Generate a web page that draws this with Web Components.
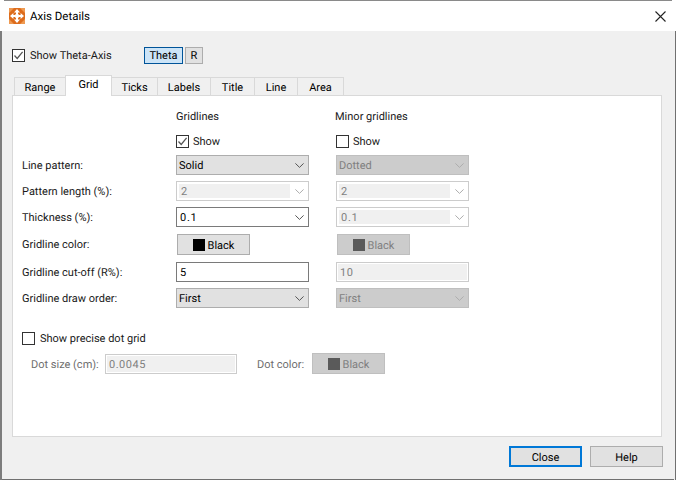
<!DOCTYPE html>
<html>
<head>
<meta charset="utf-8">
<title>Axis Details</title>
<style>
  html, body { margin: 0; padding: 0; background: #fff; }
  body { font: 12px Roboto, "Noto Sans", sans-serif; color: #000; text-rendering: geometricPrecision; }
</style>
</head>
<body>
<axis-dialog></axis-dialog>
<script>
(function() {
  'use strict';

  const CHEVRON = '<svg width="9" height="5" viewBox="0 0 9 5"><path d="M.4.4 4.5 4.4 8.6.4" fill="none" stroke="currentColor" stroke-width="1"/></svg>';

  class WinCheck extends HTMLElement {
    connectedCallback() {
      this.attachShadow({ mode: 'open' });
      const checked = this.hasAttribute('checked');
      this.shadowRoot.innerHTML = `
        <style>
          :host { display: flex; align-items: center; gap: 4px; height: 14px; white-space: nowrap; color: #1a1a1a; }
          .box { width: 11px; height: 11px; border: 1px solid #333; background: #fff; flex: none; display: block; }
          svg { display: block; }
        </style>
        <span class="box">${checked ? '<svg width="11" height="11" viewBox="0 0 11 11"><path d="M1.5 5.5 4.2 8.4 9.6 1.8" fill="none" stroke="#555" stroke-width="1.3"/></svg>' : ''}</span>
        <span><slot></slot></span>`;
    }
  }

  // combo box; state picks the disabled and editable looks
  class WinSelect extends HTMLElement {
    connectedCallback() {
      this.attachShadow({ mode: 'open' });
      this.shadowRoot.innerHTML = `
        <style>
          :host { display: block; box-sizing: border-box; width: 133px; height: 20px; border: 1px solid #adadad; background: #e1e1e1; color: #000; position: relative; }
          .in { box-sizing: border-box; display: flex; align-items: center; height: 100%; padding: 1px 0 0 2px; }
          .arrow { position: absolute; right: 4px; top: 7px; line-height: 0; color: #555; }
          :host([state="disabled"]) { background: #ccc; border-color: #bfbfbf; color: #7f7f7f; }
          :host([state="disabled"]) .arrow { color: #adadad; }
          :host([state="edit"]) { background: #fff; border-color: #7a7a7a; }
          :host([state="edit"]) .in { padding-left: 3px; letter-spacing: .7px; }
          :host([state="edit-off"]) { background: #fff; border-color: #ccc; color: #7f7f7f; }
          :host([state="edit-off"]) .in { background: #f0f0f0; margin: 2px 0 2px 2px; width: 111px; height: 14px; padding-left: 2px; letter-spacing: .7px; }
          :host([state="edit-off"]) .arrow { color: #adadad; }
        </style>
        <div class="in"><slot></slot></div>
        <div class="arrow">${CHEVRON}</div>`;
    }
  }

  class WinInput extends HTMLElement {
    connectedCallback() {
      this.attachShadow({ mode: 'open' });
      this.shadowRoot.innerHTML = `
        <style>
          :host { display: flex; align-items: center; box-sizing: border-box; width: 133px; height: 20px; border: 1px solid #7a7a7a; background: #fff; padding: 1px 0 0 3px; }
          :host([disabled]) { border-color: #ccc; background: #f0f0f0; box-shadow: inset 0 0 0 1px #fff; color: #7f7f7f; letter-spacing: .5px; }
        </style>
        <slot></slot>`;
    }
  }

  class WinButton extends HTMLElement {
    connectedCallback() {
      this.attachShadow({ mode: 'open' });
      this.shadowRoot.innerHTML = `
        <style>
          :host { display: flex; align-items: center; justify-content: center; box-sizing: border-box; width: 73px; height: 21px; border: 1px solid #adadad; background: #e1e1e1; color: #000; gap: 3px; }
          :host([default]) { border: 2px solid #0078d7; }
          :host([disabled]) { background: #ccc; border-color: #bfbfbf; color: #7f7f7f; }
          .sw { width: 12px; height: 12px; background: #000; }
          :host([disabled]) .sw { background: #5a5a5a; }
          :host(:not([swatch])) .sw { display: none; }
          .tx { padding-top: 1px; }
        </style>
        <span class="sw"></span><span class="tx"><slot></slot></span>`;
    }
  }

  class AxisDialog extends HTMLElement {
    connectedCallback() {
      this.attachShadow({ mode: 'open' });
      const tabs = ['Range', 'Grid', 'Ticks', 'Labels', 'Title', 'Line', 'Area'];
      const widths = [51, 46, 46, 53, 44, 43, 46];
      this.shadowRoot.innerHTML = `
        <style>
          :host { display: block; width: 676px; height: 480px; background: #fff; font-size: 11px; }
          .title { box-sizing: border-box; height: 31px; padding: 1px 10px 0 9px; display: flex; align-items: center; gap: 5px; color: #000; background: linear-gradient(#8a8a8a, #8a8a8a) 4px 0 / 668px 1px no-repeat #fff; font-size: 11.5px; }
          .title svg.logo { display: block; }
          .title .close { margin-left: auto; display: block; }
          .main { box-sizing: border-box; height: 449px; background: linear-gradient(#707070, #707070) 0 100% / 672px 1px no-repeat #f0f0f0; border-left: 2px solid #7d7d7d; border-right: 1px solid #707070; }
          .top { display: flex; align-items: center; padding: 15px 0 0 10px; height: 18px; }
          .top win-check { width: 132px; gap: 5px; }
          .mode { box-sizing: border-box; height: 17px; padding-top: 1px; display: flex; align-items: center; justify-content: center; border: 1px solid #adadad; background: #e1e1e1; width: 18px; }
          .modes { display: flex; gap: 2px; }
          .mode.on { width: 39px; background: #cce4f7; border-color: #005499; }
          .tabs { display: flex; padding: 10px 0 0 13px; height: 21px; align-items: flex-end; position: relative; z-index: 1; }
          .tab { box-sizing: border-box; height: 18px; padding-top: 1px; display: flex; align-items: center; justify-content: center; background: #f0f0f0; border: 1px solid #d9d9d9; border-bottom: 0; margin-left: -1px; flex: none; }
          .tab.on { height: 21px; background: #fff; margin-bottom: -1px; padding: 0 0 3px; position: relative; }
          .pane { box-sizing: border-box; margin-left: 10px; width: 650px; height: 342px; background: #fff; border: 1px solid #d9d9d9; padding: 14px 0 0 9px; }
          .form { display: grid; grid-template-columns: 154px 133px 160px; grid-template-rows: 14px 31px 26px 26px 27px 28px 26px 20px; align-items: start; }
          .form > .c2 { grid-column: 2; }
          .form > .c3 { grid-column: 3; margin-left: 27px; }
          .head { color: #1a1a1a; white-space: nowrap; }
          .head.c3 { text-indent: -1px; }
          .lab { height: 20px; line-height: 22px; color: #1a1a1a; white-space: nowrap; }
          .lab.dim { color: #6d6d6d; }
          .chk { margin-top: 10px; }
          .indent { margin-left: 1px; }
          .dots { margin-top: 23px; gap: 5px; }
          .dotrow { display: flex; align-items: center; margin: 8px 0 0 9px; height: 21px; }
          .dotrow .size { width: 74px; }
          .dotrow .color { width: 55px; }
          .dotrow win-input { width: 132px; height: 20px; }
          .dotrow .gap { width: 20px; }
          .foot { display: flex; justify-content: flex-end; gap: 8px; padding: 9px 12px 0 0; }
        </style>
        <div class="title">
          <svg class="logo" width="16" height="16" viewBox="0 0 16 16">
            <rect width="16" height="16" fill="#dd6c1c"/>
            <path d="M0 0h5L0 5zM16 0v5l-5-5zM0 16v-5l5 5zM16 16h-5l5-5z" fill="#ee9a52"/>
            <circle cx="8" cy="8" r="2.2" fill="#fff"/>
            <g fill="#fff">
              <path d="M8 1 11 4.4H9V6H7V4.4H5z"/>
              <path d="M8 15 5 11.6H7V10h2v1.6h2z"/>
              <path d="M1 8 4.4 5V7H6v2H4.4v2z"/>
              <path d="M15 8 11.6 11V9H10V7h1.6V5z"/>
            </g>
          </svg>
          <span>Axis Details</span>
          <svg class="close" width="11" height="11" viewBox="0 0 11 11"><path d="M.5.5 10.5 10.5M10.5.5.5 10.5" stroke="#222" stroke-width="1.1" fill="none"/></svg>
        </div>
        <div class="main">
          <div class="top">
            <win-check checked>Show Theta-Axis</win-check>
            <div class="modes"><div class="mode on">Theta</div><div class="mode">R</div></div>
          </div>
          <div class="tabs">
            ${tabs.map((t, i) => `<div class="tab${t === 'Grid' ? ' on' : ''}" style="width:${widths[i] + 1}px">${t}</div>`).join('')}
          </div>
          <div class="pane">
            <div class="form">
              <div class="head c2">Gridlines</div>
              <div class="head c3">Minor gridlines</div>
              <win-check class="c2 chk" checked>Show</win-check>
              <win-check class="c3 chk">Show</win-check>

              <div class="lab">Line pattern:</div>
              <win-select class="c2">Solid</win-select>
              <win-select class="c3" state="disabled">Dotted</win-select>

              <div class="lab">Pattern length (%):</div>
              <win-select class="c2" state="edit-off">2</win-select>
              <win-select class="c3" state="edit-off">2</win-select>

              <div class="lab">Thickness (%):</div>
              <win-select class="c2" state="edit">0.1</win-select>
              <win-select class="c3" state="edit-off">0.1</win-select>

              <div class="lab">Gridline color:</div>
              <win-button class="c2 indent" swatch>Black</win-button>
              <win-button class="c3 indent" swatch disabled style="margin-left:28px">Black</win-button>

              <div class="lab">Gridline cut-off (R%):</div>
              <win-input class="c2">5</win-input>
              <win-input class="c3" disabled>10</win-input>

              <div class="lab">Gridline draw order:</div>
              <win-select class="c2">First</win-select>
              <win-select class="c3" state="disabled">First</win-select>
            </div>
            <win-check class="dots">Show precise dot grid</win-check>
            <div class="dotrow">
              <span class="lab dim size">Dot size (cm):</span>
              <win-input disabled>0.0045</win-input>
              <span class="gap"></span>
              <span class="lab dim color">Dot color:</span>
              <win-button swatch disabled>Black</win-button>
            </div>
          </div>
          <div class="foot">
            <win-button default>Close</win-button>
            <win-button>Help</win-button>
          </div>
        </div>`;
    }
  }

  customElements.define('win-check', WinCheck);
  customElements.define('win-select', WinSelect);
  customElements.define('win-input', WinInput);
  customElements.define('win-button', WinButton);
  customElements.define('axis-dialog', AxisDialog);
})();
</script>
</body>
</html>
